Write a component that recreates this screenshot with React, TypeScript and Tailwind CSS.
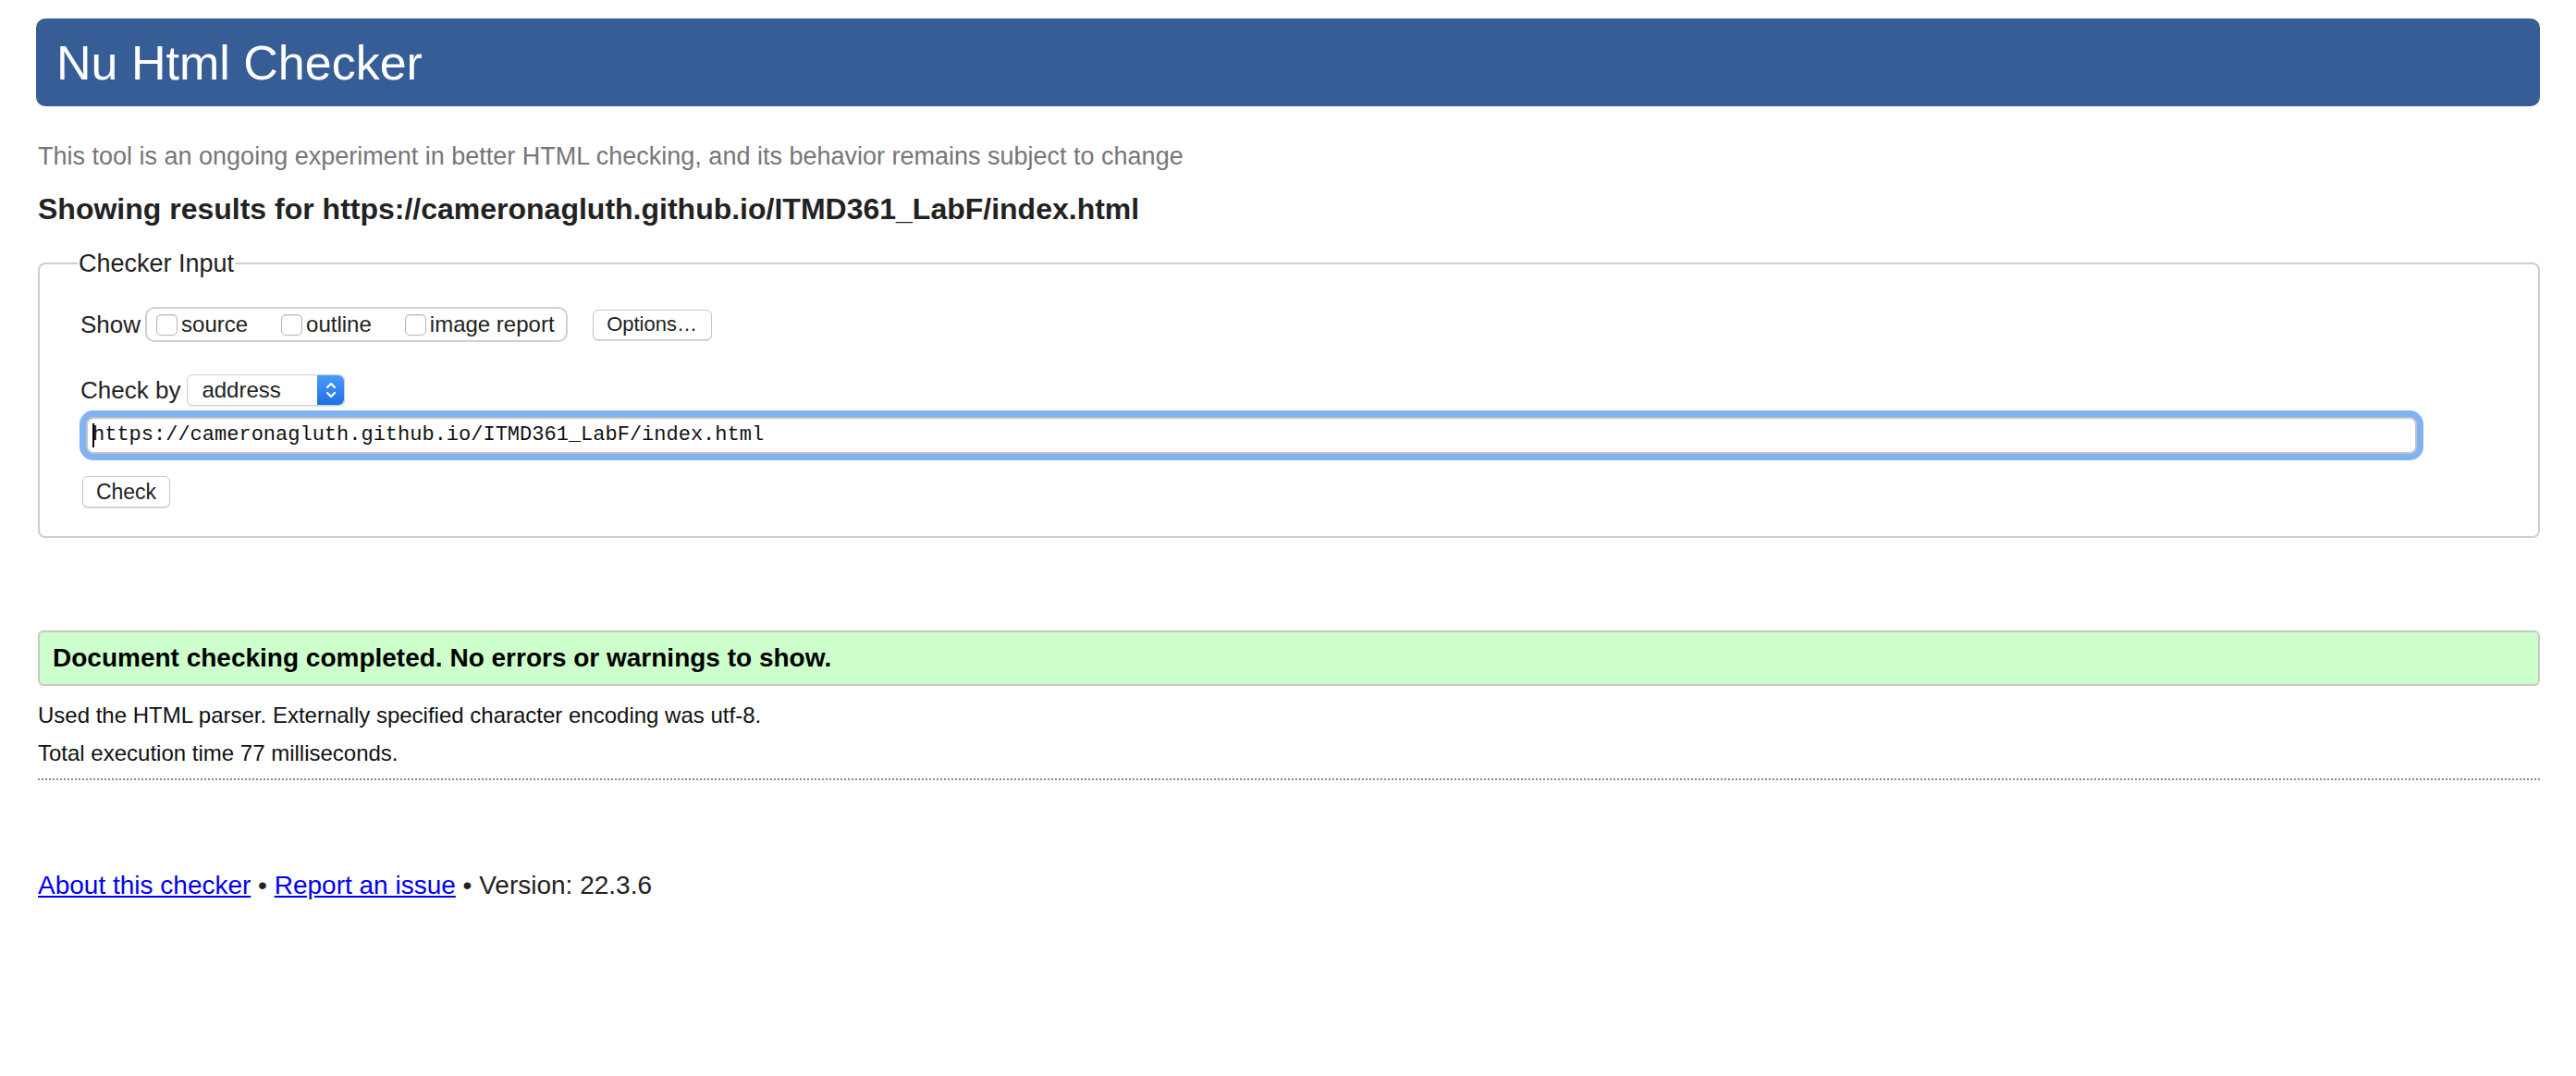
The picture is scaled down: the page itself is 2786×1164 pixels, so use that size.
const sans = "font-['Liberation_Sans',Arial,sans-serif]";

function Checkbox({ label }: { label: string }) {
  return (
    <label className="flex items-center gap-[4px]">
      <span className="block w-[23px] h-[23px] rounded-[5px] border border-[#b5b5b5] bg-white shadow-[inset_0_1px_1px_rgba(0,0,0,0.08)]" />
      <span className="text-[24px] leading-[28px] text-[#222]">{label}</span>
    </label>
  );
}

export default function App() {
  return (
    <div className={`${sans} min-h-[1164px] bg-white px-[39px] pt-[20px] text-[#222]`}>
      {/* Banner */}
      <div className="flex h-[95px] items-center rounded-[10px] bg-[#365d95] pl-[22px]">
        <h1 className="text-[52px] leading-none text-white">Nu Html Checker</h1>
      </div>

      <p className="ml-[2px] mt-[38px] text-[27px] leading-[32px] text-[#767676]">
        This tool is an ongoing experiment in better HTML checking, and its behavior remains subject to change
      </p>
      <h2 className="ml-[2px] mt-[22px] text-[32px] font-bold leading-[38px] text-[#222]">
        Showing results for https://cameronagluth.github.io/ITMD361_LabF/index.html
      </h2>

      {/* Checker input */}
      <fieldset className="ml-[2px] mt-[23px] w-[2706px] rounded-[8px] border-2 border-[#cdcdcd] pb-[31px] pl-[44px] pt-[30px]">
        <legend className="-ml-[3px] px-[1px] text-[27px] leading-[34px] text-[#222]">Checker Input</legend>

        <div className="flex items-center">
          <span className="text-[26px] leading-[32px]">Show</span>
          <div className="ml-[5px] flex h-[38px] items-center gap-[36px] rounded-[10px] border-2 border-[#cfcfcf] pl-[10px] pr-[12px]">
            <Checkbox label="source" />
            <Checkbox label="outline" />
            <Checkbox label="image report" />
          </div>
          <button className="ml-[27px] h-[33px] w-[129px] rounded-[6px] border border-[#c8c8c8] bg-white text-[22px] leading-none text-[#222] shadow-[0_1px_1px_rgba(0,0,0,0.15)]">
            Options…
          </button>
        </div>

        <div className="mt-[35px] flex items-center">
          <span className="text-[26px] leading-[32px]">Check by</span>
          <div className="ml-[7px] flex h-[34px] w-[171px] items-stretch rounded-[6px] border border-[#d0d0d0] bg-white shadow-[0_1px_1px_rgba(0,0,0,0.1)]">
            <span className="flex flex-1 items-center pl-[15px] text-[24px] leading-none">address</span>
            <span className="flex w-[29px] items-center justify-center rounded-r-[6px] bg-gradient-to-b from-[#4a9bfa] to-[#1f6fe6]">
              <svg width="14" height="24" viewBox="0 0 14 24" fill="none" stroke="white" strokeWidth="2.2" strokeLinecap="round" strokeLinejoin="round">
                <path d="M3 9l4-4 4 4" />
                <path d="M3 15l4 4 4-4" />
              </svg>
            </span>
          </div>
        </div>

        <div className="ml-[6px] mt-[12px] flex h-[40px] w-[2521px] items-center rounded-[8px] border-2 border-[#c4c4c4] bg-white pl-[5px] ring-[7px] ring-[#80b2f4]">
          <span className="-mr-[2px] block h-[26px] w-[2px] bg-black" />
          <span className="font-['Liberation_Mono',monospace] text-[22px] leading-none text-[#111]">
            https://cameronagluth.github.io/ITMD361_LabF/index.html
          </span>
        </div>

        <button className="ml-[2px] mt-[24px] h-[34px] w-[95px] rounded-[6px] border border-[#c8c8c8] bg-white text-[23px] leading-none text-[#222] shadow-[0_1px_1px_rgba(0,0,0,0.15)]">
          Check
        </button>
      </fieldset>

      {/* Result */}
      <div className="ml-[2px] mt-[100px] flex h-[60px] w-[2706px] items-center rounded-[6px] border-2 border-[#c8c8c8] bg-[#ccffcc] pl-[14px]">
        <p className="text-[28px] font-bold leading-none text-black">
          Document checking completed. No errors or warnings to show.
        </p>
      </div>

      <div className="ml-[2px] mt-[11px] text-[24px] leading-[41px] text-[#111]">
        <p>Used the HTML parser. Externally specified character encoding was utf-8.</p>
        <p>Total execution time 77 milliseconds.</p>
      </div>

      <hr className="ml-[2px] mt-[7px] w-[2706px] border-0 border-t-2 border-dotted border-[#8a8a8a]" />

      <p className="ml-[2px] mt-[97px] text-[28px] leading-[34px] text-[#222]">
        <a href="#" className="text-[#0000ee] underline">About this checker</a>
        {" • "}
        <a href="#" className="text-[#0000ee] underline">Report an issue</a>
        {" • Version: 22.3.6"}
      </p>
    </div>
  );
}
